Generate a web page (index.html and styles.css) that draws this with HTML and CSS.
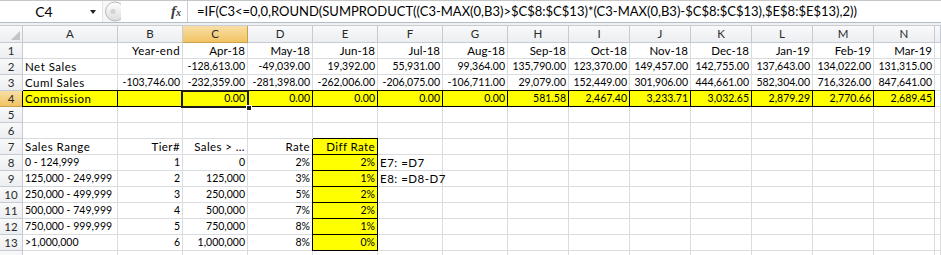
FILE: index.html
```html
<!DOCTYPE html>
<html>
<head>
<meta charset="utf-8">
<link rel="stylesheet" href="styles.css">
</head>
<body>
<div class="app">
  <div class="fbar">
    <div class="namebox"><span class="ref">C4</span><span class="caret"></span></div>
    <div class="knob"><svg width="18" height="21" viewBox="0 0 18 21"><defs><linearGradient id="kg" x1="0" y1="0" x2="0" y2="1"><stop offset="0" stop-color="#ffffff"/><stop offset="1" stop-color="#dcdcdc"/></linearGradient></defs><circle cx="12" cy="10.5" r="9.5" fill="url(#kg)" stroke="#b9b9b9"/><circle cx="10" cy="10.5" r="2.6" fill="#d2d2d2"/></svg></div>
    <div class="fxarea"><span class="fx">f<span class="fxx">x</span></span></div>
    <div class="formula">=IF(C3&lt;=0,0,ROUND(SUMPRODUCT((C3-MAX(0,B3)&gt;$C$8:$C$13)*(C3-MAX(0,B3)-$C$8:$C$13),$E$8:$E$13),2))</div>
  </div>
  <div class="band"></div>
  <div class="sheet">
    <div class="h corner"><span class="tri"></span></div><div class="h">A</div><div class="h">B</div><div class="h sel">C</div><div class="h">D</div><div class="h">E</div><div class="h">F</div><div class="h">G</div><div class="h">H</div><div class="h">I</div><div class="h">J</div><div class="h">K</div><div class="h">L</div><div class="h">M</div><div class="h">N</div><div class="h"></div>

    <div class="rh">1</div><div class="c"></div><div class="c r t">Year-end</div><div class="c r">Apr-18</div><div class="c r">May-18</div><div class="c r">Jun-18</div><div class="c r">Jul-18</div><div class="c r">Aug-18</div><div class="c r">Sep-18</div><div class="c r">Oct-18</div><div class="c r">Nov-18</div><div class="c r">Dec-18</div><div class="c r">Jan-19</div><div class="c r">Feb-19</div><div class="c r">Mar-19</div><div class="c"></div>

    <div class="rh">2</div><div class="c t">Net Sales</div><div class="c"></div><div class="c r n">-128,613.00</div><div class="c r n">-49,039.00</div><div class="c r n">19,392.00</div><div class="c r n">55,931.00</div><div class="c r n">99,364.00</div><div class="c r n">135,790.00</div><div class="c r n">123,370.00</div><div class="c r n">149,457.00</div><div class="c r n">142,755.00</div><div class="c r n">137,643.00</div><div class="c r n">134,022.00</div><div class="c r n">131,315.00</div><div class="c"></div>

    <div class="rh">3</div><div class="c t">Cuml Sales</div><div class="c r n">-103,746.00</div><div class="c r n">-232,359.00</div><div class="c r n">-281,398.00</div><div class="c r n">-262,006.00</div><div class="c r n">-206,075.00</div><div class="c r n">-106,711.00</div><div class="c r n">29,079.00</div><div class="c r n">152,449.00</div><div class="c r n">301,906.00</div><div class="c r n">444,661.00</div><div class="c r n">582,304.00</div><div class="c r n">716,326.00</div><div class="c r n">847,641.00</div><div class="c"></div>

    <div class="rh sel">4</div><div class="c y t">Commission</div><div class="c y"></div><div class="c y r n">0.00</div><div class="c y r n">0.00</div><div class="c y r n">0.00</div><div class="c y r n">0.00</div><div class="c y r n">0.00</div><div class="c y r n">581.58</div><div class="c y r n">2,467.40</div><div class="c y r n">3,233.71</div><div class="c y r n">3,032.65</div><div class="c y r n">2,879.29</div><div class="c y r n">2,770.66</div><div class="c y r n">2,689.45</div><div class="c"></div>

    <div class="rh">5</div><div class="c"></div><div class="c"></div><div class="c"></div><div class="c"></div><div class="c"></div><div class="c"></div><div class="c"></div><div class="c"></div><div class="c"></div><div class="c"></div><div class="c"></div><div class="c"></div><div class="c"></div><div class="c"></div><div class="c"></div>

    <div class="rh">6</div><div class="c"></div><div class="c"></div><div class="c"></div><div class="c"></div><div class="c"></div><div class="c"></div><div class="c"></div><div class="c"></div><div class="c"></div><div class="c"></div><div class="c"></div><div class="c"></div><div class="c"></div><div class="c"></div><div class="c"></div>

    <div class="rh">7</div><div class="c t">Sales Range</div><div class="c r t">Tier#</div><div class="c r t">Sales &gt; ...</div><div class="c r t">Rate</div><div class="c y r t">Diff Rate</div><div class="c"></div><div class="c"></div><div class="c"></div><div class="c"></div><div class="c"></div><div class="c"></div><div class="c"></div><div class="c"></div><div class="c"></div><div class="c"></div>

    <div class="rh">8</div><div class="c n">0 - 124,999</div><div class="c r n">1</div><div class="c r n">0</div><div class="c r n">2%</div><div class="c y r n">2%</div><div class="c t">E7: =D7</div><div class="c"></div><div class="c"></div><div class="c"></div><div class="c"></div><div class="c"></div><div class="c"></div><div class="c"></div><div class="c"></div><div class="c"></div>

    <div class="rh">9</div><div class="c n">125,000 - 249,999</div><div class="c r n">2</div><div class="c r n">125,000</div><div class="c r n">3%</div><div class="c y r n">1%</div><div class="c t">E8: =D8-D7</div><div class="c"></div><div class="c"></div><div class="c"></div><div class="c"></div><div class="c"></div><div class="c"></div><div class="c"></div><div class="c"></div><div class="c"></div>

    <div class="rh">10</div><div class="c n">250,000 - 499,999</div><div class="c r n">3</div><div class="c r n">250,000</div><div class="c r n">5%</div><div class="c y r n">2%</div><div class="c"></div><div class="c"></div><div class="c"></div><div class="c"></div><div class="c"></div><div class="c"></div><div class="c"></div><div class="c"></div><div class="c"></div><div class="c"></div>

    <div class="rh">11</div><div class="c n">500,000 - 749,999</div><div class="c r n">4</div><div class="c r n">500,000</div><div class="c r n">7%</div><div class="c y r n">2%</div><div class="c"></div><div class="c"></div><div class="c"></div><div class="c"></div><div class="c"></div><div class="c"></div><div class="c"></div><div class="c"></div><div class="c"></div><div class="c"></div>

    <div class="rh">12</div><div class="c n">750,000 - 999,999</div><div class="c r n">5</div><div class="c r n">750,000</div><div class="c r n">8%</div><div class="c y r n">1%</div><div class="c"></div><div class="c"></div><div class="c"></div><div class="c"></div><div class="c"></div><div class="c"></div><div class="c"></div><div class="c"></div><div class="c"></div><div class="c"></div>

    <div class="rh">13</div><div class="c n">&gt;1,000,000</div><div class="c r n">6</div><div class="c r n">1,000,000</div><div class="c r n">8%</div><div class="c y r n">0%</div><div class="c"></div><div class="c"></div><div class="c"></div><div class="c"></div><div class="c"></div><div class="c"></div><div class="c"></div><div class="c"></div><div class="c"></div><div class="c"></div>

    <div class="rh"></div><div class="c"></div><div class="c"></div><div class="c"></div><div class="c"></div><div class="c"></div><div class="c"></div><div class="c"></div><div class="c"></div><div class="c"></div><div class="c"></div><div class="c"></div><div class="c"></div><div class="c"></div><div class="c"></div><div class="c"></div>

    <div class="selbox"><span class="handle"></span></div>
  </div>
</div>
</body>
</html>
```

FILE: styles.css
```css
* { box-sizing: border-box; }
html, body { margin: 0; padding: 0; background: #ffffff; }
.app {
  width: 941px;
  height: 255px;
  overflow: hidden;
  font-family: "Lato", "Liberation Sans", sans-serif;
  color: #000;
}
.fbar {
  display: flex;
  height: 23px;
  border-top: 1px solid #c6c6c6;
  border-bottom: 1px solid #b6bcc6;
  background: #ffffff;
}
.namebox {
  width: 103px;
  display: flex;
  align-items: center;
  position: relative;
  border-right: 1px solid #e4e4e4;
}
.ref {
  width: 88px;
  text-align: center;
  font-size: 14px;
  line-height: 20px;
}
.caret {
  width: 0; height: 0;
  border-left: 3.5px solid transparent;
  border-right: 3.5px solid transparent;
  border-top: 4px solid #222;
  margin-left: 2px;
  margin-top: 1px;
}
.knob {
  width: 18px;
  display: flex;
  align-items: center;
  overflow: hidden;
  background: #f7f7f7;
}
.knob svg { display: block; }
.fxarea {
  width: 67px;
  display: flex;
  align-items: center;
  justify-content: flex-end;
  padding-right: 6px;
  background: #ffffff;
  border-right: 1px solid #c9ced6;
}
.fx {
  font-family: "Liberation Serif", serif;
  font-style: italic;
  font-weight: bold;
  font-size: 15px;
  color: #3a3a3a;
  line-height: 16px;
}
.fxx { font-size: 10px; }
.formula {
  flex: 1;
  font-size: 13px;
  line-height: 21px;
  padding-left: 9px;
  white-space: nowrap;
  overflow: hidden;
}
.band {
  height: 3px;
  background: #eef0f3;
  border-bottom: 1px solid #c9ccd1;
}
.sheet {
  position: relative;
  display: grid;
  grid-template-columns: 23px 95px repeat(6, 65px) repeat(7, 61px) 6px;
  grid-template-rows: 17px repeat(13, 16px) 16px;
  font-size: 11.5px;
}
.h, .rh {
  background: linear-gradient(#f9f9fa, #eceef1);
  border-right: 1px solid #c5cad3;
  border-bottom: 1px solid #c5cad3;
  color: #2a2a2a;
  display: flex;
  align-items: center;
  justify-content: center;
  line-height: 14px;
}
.h.sel, .rh.sel {
  background: linear-gradient(#f9dea6, #f1c462);
  border-right-color: #c9a04c;
  border-bottom-color: #c9a04c;
}
.corner { position: relative; }
.tri {
  position: absolute;
  right: 2px;
  bottom: 2px;
  width: 0; height: 0;
  border-left: 9px solid transparent;
  border-bottom: 9px solid #c4c4c4;
}
.c {
  border-right: 1px solid #dadcdd;
  border-bottom: 1px solid #dadcdd;
  line-height: 15px;
  padding: 0 2px 0 2px;
  white-space: nowrap;
  overflow: visible;
}
.r { text-align: right; padding-right: 2px; }
.n { font-size: 10.5px; }
.t { letter-spacing: 0.5px; }
.r.t { letter-spacing: 0.4px; }
.y {
  background: #ffff00;
  border-right: 1px solid #000;
  border-bottom: 1px solid #000;
  box-shadow: 0 -1px 0 #000, -1px 0 0 #000;
}
.selbox {
  position: absolute;
  left: 181px;
  top: 64px;
  width: 68px;
  height: 18px;
  border: 2px solid #1b1b1b;
  pointer-events: none;
}
.handle {
  position: absolute;
  right: -5px;
  bottom: -5px;
  width: 6px;
  height: 6px;
  background: #1b1b1b;
  border: 1px solid #fff;
}
```
